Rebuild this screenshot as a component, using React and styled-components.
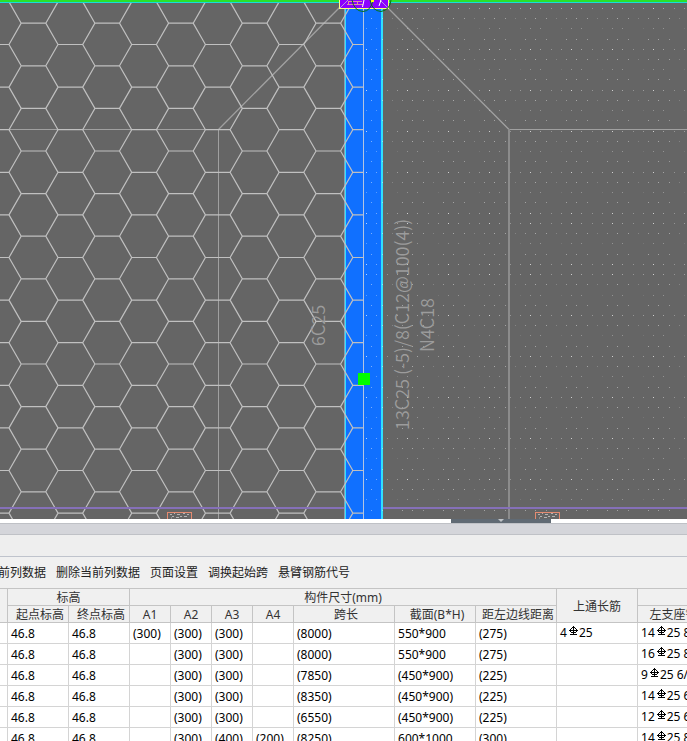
import React from 'react'
import styled, { createGlobalStyle } from 'styled-components'

const GlobalStyle = createGlobalStyle`
*{
  box-sizing: border-box;
}
body{
  margin: 0;
  background: #fff;
  overflow: hidden;
  font-family: "Noto Sans", "Noto Sans CJK SC", sans-serif;
  font-size: 12px;
  color: #000;
}
`

const actions = ['前列数据', '删除当前列数据', '页面设置', '调换起始跨', '悬臂钢筋代号']

const columns = [8, 61, 61, 41, 41, 41, 41, 101, 81, 81, 81]

const spans = [
  { a: ['(300)', '(300)', '(300)', ''], len: '(8000)', size: '550*900', dist: '(275)', top: ['4', '25'], left: ['14', '25 8'] },
  { a: ['', '(300)', '(300)', ''], len: '(8000)', size: '550*900', dist: '(275)', left: ['16', '25 8'] },
  { a: ['', '(300)', '(300)', ''], len: '(7850)', size: '(450*900)', dist: '(225)', left: ['9', '25 6/'] },
  { a: ['', '(300)', '(300)', ''], len: '(8350)', size: '(450*900)', dist: '(225)', left: ['14', '25 6'] },
  { a: ['', '(300)', '(300)', ''], len: '(6550)', size: '(450*900)', dist: '(225)', left: ['12', '25 6'] },
  { a: ['', '(300)', '(400)', '(200)'], len: '(8250)', size: '600*1000', dist: '(300)', left: ['14', '25 8'] },
]

// slab hatch: honeycomb cell and the speckle rows
const HEX_W = 73.7
const HEX_H = 42.6
const ROW = 10.24

const hexPath = () => {
  let d = ''
  for (let c = -1; c < 5; c++) {
    for (let r = -1; r < 13; r++) {
      const x = 9 + c * HEX_W
      const y = 44.5 + r * HEX_H
      d += `M${x} ${y}l12.2 -21.3h24.6l12.2 21.3h24.7M${x} ${y}l12.2 21.3M${x + 49} ${y}l-12.2 21.3`
    }
  }
  return d
}

const dotRows = () => {
  const dots = []
  for (let n = 0; n < 50; n++) {
    const shift = (n > 20 ? 1 : 0) + (n > 25 ? 1 : 0)
    const phase = (n - shift + 4) % 4
    const y = Math.floor(8.3 + n * ROW)
    const odd = phase % 2
    const levels = [[0.3, 0.35, 0.7, 0.4], [0.2, 0.35, 0.45, 0.4], [0, 0.1, 0.3, 0.3], [0, 0.4, 0.4, 0.35]][phase]
    levels.forEach((o, m) => {
      if (o) dots.push({ x: Math.floor(m * ROW + odd * 5.5), y, o })
    })
  }
  return dots
}

const Rebar = () => (
  <RebarIcon viewBox="0 0 9 10" aria-hidden="true">
    <path d="M4.5 0V9M3 1.5H6M2 2.5H3M6 2.5H7M1.5 3V6M7.5 3V6M0 4.5H9M2 6.5H7M1 8.5H8" />
  </RebarIcon>
)

const Bars = ({ value }) => value ? <>{value[0]}<Rebar />{value[1]}</> : null

const SectionTag = ({ x }) => (
  <g>
    <rect x={x + 0.5} y="512.5" width="24" height="12" fill="none" stroke="#e58a70" />
    <path
      d={`M${x + 3} 514.5h2M${x + 7} 513.5h1M${x + 10} 514.5h3M${x + 16} 513.5h2M${x + 20} 514.5h2M${x + 5} 516.5h2M${x + 9} 517.5h3M${x + 13} 516.5h2M${x + 17} 516.5h3M${x + 4} 518h1`}
      stroke="#b4b4b4"
    />
  </g>
)

const Drawing = () => (
  <Canvas role="img" aria-label="梁平面图">
    <defs>
      <pattern id="speckle" x="387" y="0" width="41" height="519" patternUnits="userSpaceOnUse">
        {dotRows().map((d, i) => <rect key={i} x={d.x} y={d.y} width="1" height="1" fill="#fff" opacity={d.o} />)}
      </pattern>
      <clipPath id="slab"><rect width="363" height="519" /></clipPath>
    </defs>

    <rect x="344" width="39" height="519" fill="#1070ff" />
    <g fill="none" stroke="#a0a0a0">
      <path d="M0 129.5H218.5M218.5 129V519" />
      <path d="M218.5 129.5L344 3M384 4L509 129.5" strokeWidth="1.3" />
      <line x1="509" y1="129.5" x2="100%" y2="129.5" />
    </g>
    <rect x="508" y="129" width="2" height="390" fill="#8c8c8c" />

    <path d="M344.5 0V519" stroke="#8c9cb4" />
    <path d="M345.5 0V519" stroke="#30e0ff" />
    <rect x="381" width="2" height="519" fill="#30e0ff" />
    <rect x="365" width="100%" height="519" fill="url(#speckle)" />
    <path d={hexPath()} fill="none" stroke="#c0c0c0" strokeWidth="1.2" clipPath="url(#slab)" />
    <path d="M363.5 0V519" stroke="#b4c4e0" />
    <rect y="507" width="344" height="2" fill="#8570b8" />
    <rect x="383" y="507" width="100%" height="2" fill="#8570b8" />

    <rect width="100%" height="2" fill="#2be02b" />
    <rect y="2" width="100%" height="1" fill="#18dcdc" />
    <rect x="339.5" y="-4" width="49" height="12.5" fill="#8b00ff" stroke="#ffff80" />
    <g fill="none">
      <path d="M340 8L348 0M380 0L388 8" stroke="#b898e0" />
      <path d="M347 4.5H363M349 1.5H362M348.5 1V4M357.5 1V4" stroke="#e08aa8" />
      <path d="M364 0L362.5 7M381 0L379 6M372 0V3" stroke="#fff" />
      <path d="M352 0Q354 11 363 11.5Q371 11 373 0M370 0Q372 11 381 11.5Q390 10 391 0" stroke="#087018" />
    </g>
    <rect x="371" width="3" height="2" fill="#ff0" />

    <rect x="358" y="373" width="12" height="12" fill="#0f0" />
    <SectionTag x={167} />
    <SectionTag x={535} />

    <Note transform="translate(325 346) rotate(-90)">6C25</Note>
    <Note transform="translate(409 430) rotate(-90)">13C25 (-5)/8(C12@100(4))</Note>
    <Note transform="translate(434 352) rotate(-90)">N4C18</Note>
  </Canvas>
)

const App = () => {
  return (
    <Page>
      <GlobalStyle />
      <Drawing />
      <Splitter>
        <Handle aria-label="折叠">
          <svg width="8" height="4" viewBox="0 0 8 4"><path d="M1 0H7L4 3Z" fill="#c0c4c8" /></svg>
        </Handle>
      </Splitter>
      <TitleBar />
      <PanelHead />
      <Toolbar>
        {actions.map((name) => <ToolButton key={name}>{name}</ToolButton>)}
      </Toolbar>
      <Grid>
        <colgroup>
          {columns.map((w, i) => <col key={i} width={w} />)}
          <col />
        </colgroup>
        <thead>
          <tr>
            <Head rowSpan={2} />
            <Head colSpan={2}>标高</Head>
            <Head colSpan={7}>构件尺寸(mm)</Head>
            <Head rowSpan={2}>上通长筋</Head>
            <Head />
          </tr>
          <tr>
            <Head $indent>起点标高</Head>
            <Head $indent>终点标高</Head>
            <Head>A1</Head>
            <Head>A2</Head>
            <Head>A3</Head>
            <Head>A4</Head>
            <Head $indent>跨长</Head>
            <Head $indent>截面(B*H)</Head>
            <Head $indent>距左边线距离</Head>
            <Head>左支座钢筋</Head>
          </tr>
        </thead>
        <tbody>
          {spans.map((row, i) => (
            <tr key={i}>
              <Cell />
              <Cell>46.8</Cell>
              <Cell>46.8</Cell>
              {row.a.map((v, j) => <Cell key={j}>{v}</Cell>)}
              <Cell>{row.len}</Cell>
              <Cell>{row.size}</Cell>
              <Cell>{row.dist}</Cell>
              <Cell $bars><Bars value={row.top} /></Cell>
              <Cell $bars><Bars value={row.left} /></Cell>
            </tr>
          ))}
        </tbody>
      </Grid>
    </Page>
  )
}

const Page = styled.main`
display: flex;
flex-direction: column;
height: 100vh;
overflow: hidden;
background: #fff;
`

const Canvas = styled.svg`
display: block;
flex: none;
width: 100%;
height: 519px;
background: #656565;
`

const Note = styled.text`
font-family: "Noto Sans CJK SC", sans-serif;
font-size: 18px;
font-weight: 350;
fill: #9c9c9c;
`

const Splitter = styled.div`
flex: none;
height: 4px;
padding-left: 451px;
background: #fff;
`

const Handle = styled.button`
display: flex;
justify-content: center;
width: 100px;
height: 4px;
padding: 0;
border: 0;
background: #606a74;
`

const TitleBar = styled.div`
flex: none;
height: 12px;
background: #d4d5da;
border-top: 1px solid #bfc1c6;
border-bottom: 1px solid #bfc1c6;
`

const PanelHead = styled.div`
flex: none;
height: 22px;
background: #eee;
border-bottom: 1px solid #bfc3cc;
`

const Toolbar = styled.div`
flex: none;
display: flex;
align-items: center;
gap: 10px;
height: 31px;
padding-bottom: 2px;
margin-left: -2px;
background: #f0f0f0;
`

const ToolButton = styled.button`
padding: 0;
border: 0;
background: none;
font: inherit;
color: #222;
white-space: nowrap;
`

const Grid = styled.table`
flex: none;
width: 100%;
min-width: 722px;
table-layout: fixed;
border-collapse: separate;
border-spacing: 0;
border-top: 1px solid #c4c4c4;
`

const Head = styled.th`
height: 17px;
padding: 2px 0 0 ${(props) => props.$indent ? '4px' : '0'};
background: #f0f0f0;
border-right: 1px solid #c4c4c4;
border-bottom: 1px solid #c4c4c4;
font-weight: 400;
line-height: 14px;
color: #333;
text-align: center;
white-space: nowrap;
`

const Cell = styled.td`
height: 21px;
padding: ${(props) => props.$bars ? '0' : '2px'} 0 0 3px;
border-right: 1px solid #d4d4d4;
border-bottom: 1px solid #d4d4d4;
line-height: 18px;
white-space: nowrap;
`

const RebarIcon = styled.svg`
width: 9px;
height: 10px;
margin: 0 1px 1px 2px;
fill: none;
stroke: #000;
`

export default App
